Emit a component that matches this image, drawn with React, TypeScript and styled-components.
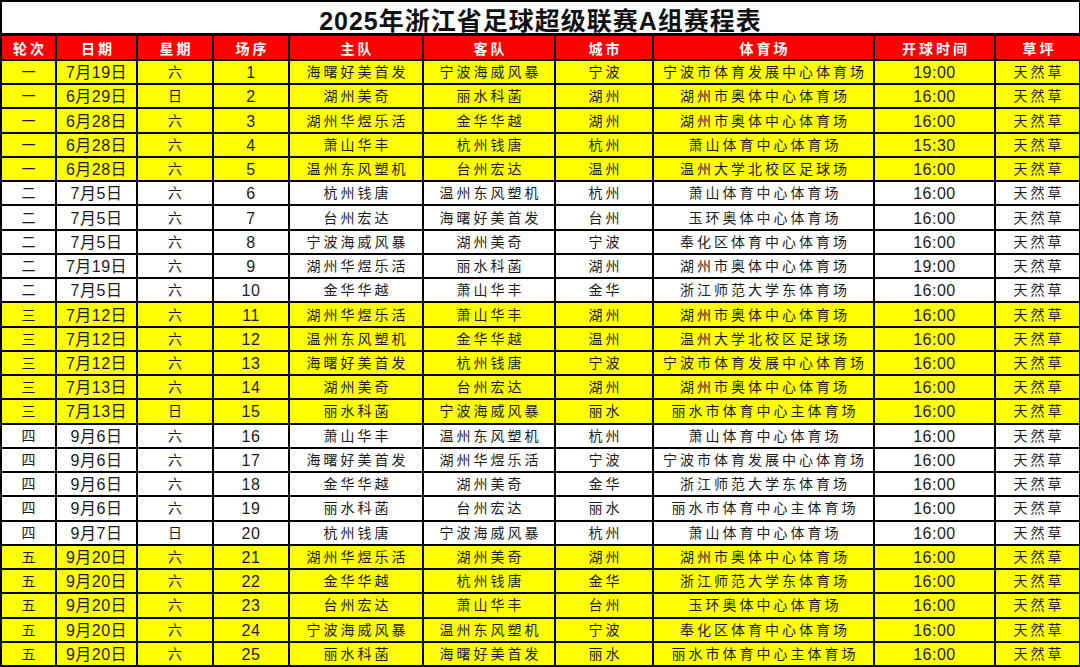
import React from "react";
import styled, { createGlobalStyle } from "styled-components";

const GlobalStyle = createGlobalStyle`
  html, body {
    margin: 0;
    padding: 0;
    background: #ffffff;
  }
  body {
    font-family: "Liberation Sans", "Noto Sans CJK SC", sans-serif;
  }
`;

type Match = {
  round: string;
  date: string;
  weekday: string;
  no: number;
  home: string;
  away: string;
  city: string;
  stadium: string;
  time: string;
  turf: string;
};

const rows: Match[] = [
  ["一", "7月19日", "六", 1, "海曙好美首发", "宁波海威风暴", "宁波", "宁波市体育发展中心体育场", "19:00"],
  ["一", "6月29日", "日", 2, "湖州美奇", "丽水科菡", "湖州", "湖州市奥体中心体育场", "16:00"],
  ["一", "6月28日", "六", 3, "湖州华煜乐活", "金华华越", "湖州", "湖州市奥体中心体育场", "16:00"],
  ["一", "6月28日", "六", 4, "萧山华丰", "杭州钱唐", "杭州", "萧山体育中心体育场", "15:30"],
  ["一", "6月28日", "六", 5, "温州东风塑机", "台州宏达", "温州", "温州大学北校区足球场", "16:00"],
  ["二", "7月5日", "六", 6, "杭州钱唐", "温州东风塑机", "杭州", "萧山体育中心体育场", "16:00"],
  ["二", "7月5日", "六", 7, "台州宏达", "海曙好美首发", "台州", "玉环奥体中心体育场", "16:00"],
  ["二", "7月5日", "六", 8, "宁波海威风暴", "湖州美奇", "宁波", "奉化区体育中心体育场", "16:00"],
  ["二", "7月19日", "六", 9, "湖州华煜乐活", "丽水科菡", "湖州", "湖州市奥体中心体育场", "19:00"],
  ["二", "7月5日", "六", 10, "金华华越", "萧山华丰", "金华", "浙江师范大学东体育场", "16:00"],
  ["三", "7月12日", "六", 11, "湖州华煜乐活", "萧山华丰", "湖州", "湖州市奥体中心体育场", "16:00"],
  ["三", "7月12日", "六", 12, "温州东风塑机", "金华华越", "温州", "温州大学北校区足球场", "16:00"],
  ["三", "7月12日", "六", 13, "海曙好美首发", "杭州钱唐", "宁波", "宁波市体育发展中心体育场", "16:00"],
  ["三", "7月13日", "六", 14, "湖州美奇", "台州宏达", "湖州", "湖州市奥体中心体育场", "16:00"],
  ["三", "7月13日", "日", 15, "丽水科菡", "宁波海威风暴", "丽水", "丽水市体育中心主体育场", "16:00"],
  ["四", "9月6日", "六", 16, "萧山华丰", "温州东风塑机", "杭州", "萧山体育中心体育场", "16:00"],
  ["四", "9月6日", "六", 17, "海曙好美首发", "湖州华煜乐活", "宁波", "宁波市体育发展中心体育场", "16:00"],
  ["四", "9月6日", "六", 18, "金华华越", "湖州美奇", "金华", "浙江师范大学东体育场", "16:00"],
  ["四", "9月6日", "六", 19, "丽水科菡", "台州宏达", "丽水", "丽水市体育中心主体育场", "16:00"],
  ["四", "9月7日", "日", 20, "杭州钱唐", "宁波海威风暴", "杭州", "萧山体育中心体育场", "16:00"],
  ["五", "9月20日", "六", 21, "湖州华煜乐活", "湖州美奇", "湖州", "湖州市奥体中心体育场", "16:00"],
  ["五", "9月20日", "六", 22, "金华华越", "杭州钱唐", "金华", "浙江师范大学东体育场", "16:00"],
  ["五", "9月20日", "六", 23, "台州宏达", "萧山华丰", "台州", "玉环奥体中心体育场", "16:00"],
  ["五", "9月20日", "六", 24, "宁波海威风暴", "温州东风塑机", "宁波", "奉化区体育中心体育场", "16:00"],
  ["五", "9月20日", "六", 25, "丽水科菡", "海曙好美首发", "丽水", "丽水市体育中心主体育场", "16:00"],
].map(([round, date, weekday, no, home, away, city, stadium, time]) => ({
  round: round as string,
  date: date as string,
  weekday: weekday as string,
  no: no as number,
  home: home as string,
  away: away as string,
  city: city as string,
  stadium: stadium as string,
  time: time as string,
  turf: "天然草",
}));

const headers = ["轮次", "日期", "星期", "场序", "主队", "客队", "城市", "体育场", "开球时间", "草坪"];

// rounds 一 / 三 / 五 are highlighted yellow
const highlighted = ["一", "三", "五"];

const Sheet = styled.div`
  display: grid;
  grid-template-columns: 55px 81px 76px 76px 134px 132px 98px 221px 121px 86px;
  grid-template-rows: 34px 25px repeat(25, 1fr);
  width: 1080px;
  height: 667px;
  box-sizing: border-box;
  border-left: 2px solid #000;
  border-top: 2px solid #000;
`;

const Title = styled.div`
  grid-column: 1 / -1;
  display: flex;
  align-items: center;
  justify-content: center;
  box-sizing: border-box;
  border-right: 3px solid #000;
  border-bottom: 3px solid #000;
  background: #ffffff;
  color: #111;
  font-size: 25px;
  font-weight: 700;
  letter-spacing: 1px;
  padding-top: 2px;
`;

const HeadCell = styled.div`
  display: flex;
  align-items: center;
  justify-content: center;
  box-sizing: border-box;
  border-right: 2px solid #000;
  border-bottom: 2px solid #000;
  background: #ff0000;
  color: #ffffff;
  font-size: 14px;
  font-weight: 700;
  letter-spacing: 3px;
  padding-left: 3px;
  &:last-child {
    border-right-width: 3px;
  }
`;

const Cell = styled.div<{ $bg: string; $cjk?: boolean; $last?: boolean }>`
  display: flex;
  align-items: center;
  justify-content: center;
  box-sizing: border-box;
  border-right: ${(p) => (p.$last ? 3 : 2)}px solid #000;
  border-bottom: 2px solid #000;
  background: ${(p) => p.$bg};
  color: #1c1c1c;
  font-size: ${(p) => (p.$cjk ? 14 : 16)}px;
  line-height: 1;
  letter-spacing: ${(p) => (p.$cjk ? 3 : 0.5)}px;
  padding-left: ${(p) => (p.$cjk ? 3 : 0)}px;
  padding-top: ${(p) => (p.$cjk ? 0 : 2)}px;
  white-space: nowrap;
  overflow: hidden;
`;

export default function App() {
  return (
    <>
      <GlobalStyle />
      <Sheet>
        <Title>2025年浙江省足球超级联赛A组赛程表</Title>
        {headers.map((h) => (
          <HeadCell key={h}>{h}</HeadCell>
        ))}
        {rows.map((r) => {
          const bg = highlighted.includes(r.round) ? "#ffff00" : "#ffffff";
          return (
            <React.Fragment key={r.no}>
              <Cell $bg={bg} $cjk>{r.round}</Cell>
              <Cell $bg={bg}>{r.date}</Cell>
              <Cell $bg={bg} $cjk>{r.weekday}</Cell>
              <Cell $bg={bg}>{r.no}</Cell>
              <Cell $bg={bg} $cjk>{r.home}</Cell>
              <Cell $bg={bg} $cjk>{r.away}</Cell>
              <Cell $bg={bg} $cjk>{r.city}</Cell>
              <Cell $bg={bg} $cjk>{r.stadium}</Cell>
              <Cell $bg={bg}>{r.time}</Cell>
              <Cell $bg={bg} $cjk $last>{r.turf}</Cell>
            </React.Fragment>
          );
        })}
      </Sheet>
    </>
  );
}
